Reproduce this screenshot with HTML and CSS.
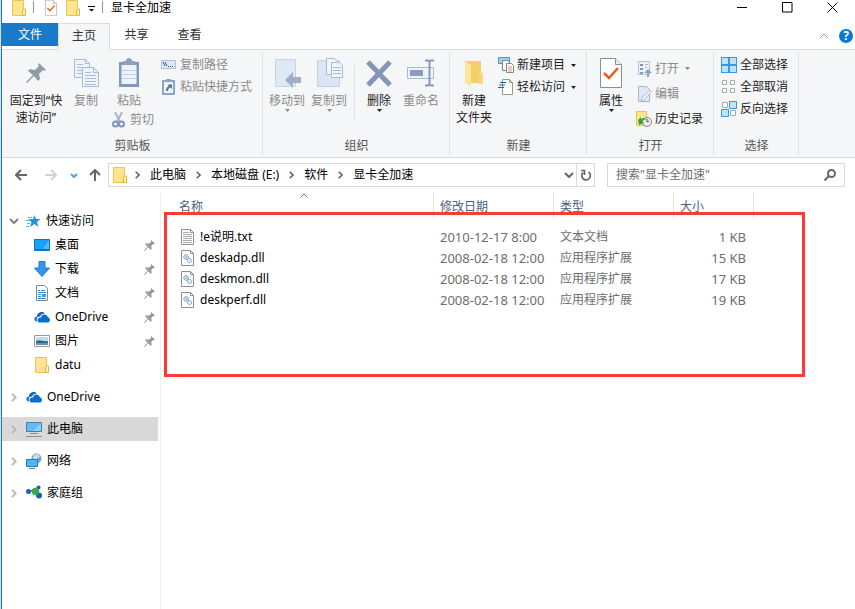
FILE: index.html
```html
<!DOCTYPE html>
<html lang="zh-CN">
<head>
<meta charset="utf-8">
<title>显卡全加速</title>
<link rel="stylesheet" href="styles.css">
</head>
<body>
<svg class="sprite" aria-hidden="true">
  <symbol id="folder" viewBox="0 0 14 16"><path d="M.5.5h11v9h1.500v6H.5z" fill="#ffe592" stroke="#eac54f"/><path d="M10.500 15.500V10l1-1h2v6.500z" fill="#fff0b8" stroke="#e3b83a"/></symbol>
  <symbol id="check-doc" viewBox="0 0 24 30"><path d="M1.500.5h15l6 6v23h-21z" fill="#fff" stroke="#8d8d8d"/><path d="M16.500.5v6h6" fill="#eee" stroke="#8d8d8d"/><path d="M5 15l5 5 9-10" fill="none" stroke="#f05a14" stroke-width="2.500"/></symbol>
  <symbol id="pin" viewBox="0 0 20 20"><path d="M13 0l7 7-2 1-1-1-4 4 1 5-2 2-4-5-7 7-1-1 7-7-5-4 2-2 5 1 4-4-1-1z" fill="#8e9aa4"/></symbol>
  <symbol id="caret" viewBox="0 0 5 3"><path d="M0 0h5L2.500 3z" fill="currentColor"/></symbol>
  <symbol id="chev-right" viewBox="0 0 5 8"><path d="M.7.7L4 4 .7 7.300" fill="none" stroke="currentColor" stroke-width="1.600"/></symbol>
  <symbol id="chev-down" viewBox="0 0 10 6"><path d="M1 1l4 4 4-4" fill="none" stroke="currentColor" stroke-width="2"/></symbol>
  <symbol id="pages" viewBox="0 0 25 28"><g fill="#edf3fb" stroke="#a9b9d2"><path d="M.5.5h11l4 4v14H.5z"/><path d="M8.500 8.500h11l5 5v14h-16z"/><path d="M11.500.5v4h4M19.500 8.500v5h5" fill="none"/></g><path d="M3 5.500h6M3 8.500h5M3 11.500h5M3 14.500h5M11 13.500h6M11 16.500h11M11 19.500h11M11 22.500h11M11 25.500h11" stroke="#a9bcdc"/></symbol>
  <symbol id="onedrive" viewBox="0 0 16 11"><path d="M1 9C-.5 7 1 5 3 5 3 1 8-1 11 2c-3 0-4 1-5 3-3 0-4 2-3 5-1 0-2-.3-2-1z" fill="#1067c4"/><path d="M4 10C2.500 8 4.500 5.500 7 6c.5-4 6-4 7 0 2.500.2 2.700 4.500 0 5H6c-1 0-2-.3-2-1z" fill="#0a6fd0"/></symbol>
  <symbol id="dll" viewBox="0 0 13 16"><path d="M.5.5h9l3 3v12H.5z" fill="#fff" stroke="#909090"/><path d="M9.500.5v3h3" fill="none" stroke="#909090"/><circle cx="5" cy="7" r="2.300" fill="#e5e9ed" stroke="#78838b" stroke-dasharray="1.500 .5"/><circle cx="5" cy="7" r=".8" fill="#8d9aa5"/><circle cx="8.500" cy="10.500" r="2.200" fill="#d6ebf8" stroke="#6fa5c6" stroke-dasharray="1.500 .5"/></symbol>
</svg>

<div class="window">
  <header class="titlebar">
    <svg class="qa-folder"><use href="#folder"/></svg><i class="tick"></i>
    <svg class="qa-doc"><use href="#check-doc"/></svg>
    <svg class="qa-folder"><use href="#folder"/></svg>
    <svg class="qa-menu" viewBox="0 0 7 6"><path d="M0 0h7v1H0zM1 3h5L3.500 5.500z"/></svg><i class="tick"></i>
    <h1>显卡全加速</h1>
    <div class="win-buttons">
      <button aria-label="最小化"><svg viewBox="0 0 11 11"><path d="M0 5.500h10"/></svg></button>
      <button aria-label="最大化"><svg viewBox="0 0 11 11"><path d="M.5.5h9.500v9.500H.5z"/></svg></button>
      <button aria-label="关闭"><svg viewBox="0 0 11 11"><path d="M.5.5l10 10M10.500.5l-10 10"/></svg></button>
    </div>
  </header>

  <nav class="tabs">
    <button class="file-tab">文件</button>
    <button class="tab active">主页</button>
    <button class="tab">共享</button>
    <button class="tab">查看</button>
    <div class="tab-tools">
      <button aria-label="折叠功能区"><svg class="collapse" viewBox="0 0 10 6"><path d="M1 5l4-4 4 4"/></svg></button>
      <button class="help" aria-label="帮助">?</button>
    </div>
  </nav>

  <section class="ribbon">
    <div class="group clipboard">
      <div class="body">
        <button class="big pin-btn"><span class="ico"><svg class="i-pin"><use href="#pin"/></svg></span>固定到“快<br>速访问”</button>
        <button class="big narrow off"><span class="ico"><svg class="i-pages"><use href="#pages"/></svg></span>复制</button>
        <div class="paste-grid">
          <button class="big narrow off"><span class="ico"><svg class="i-paste" viewBox="0 0 22 30"><path d="M1 4h20v25H1z" fill="#8398bd"/><path d="M3.500 7h15v19h-15z" fill="#eef4fc"/><path d="M5 3h3c0-4 6-4 6 0h3v4H5z" fill="#8fa0be"/><path d="M4 12.500h14M4 16.500h14M4 20.500h14" stroke="#c3d2e8"/></svg></span>粘贴</button>
          <div class="stack">
            <button class="small off"><svg viewBox="0 0 16 16"><path d="M.5 3.500h14v8H.5z" fill="#dce8f7" stroke="#b3c0d4"/><path d="M2 5l2 4m0-4l2 4M7 9.500h1m1 0h1m1 0h1" stroke="#44587c" fill="none"/></svg>复制路径</button>
            <button class="small off"><svg viewBox="0 0 16 16"><path d="M2 2h11v13H2z" fill="#edf4fc" stroke="#8fa3c2" stroke-width="2"/><path d="M5 0h5v3H5z" fill="#8fa3c2"/><path d="M5 12c0-3 1-4 3-5L6.500 5.500H11V10L9.500 8.500C8 9 7 10 7 12z" fill="#5c7399"/></svg>粘贴快捷方式</button>
          </div>
          <button class="small off cut"><svg viewBox="0 0 16 16"><path d="M4 0l5 10M11 0L6 10" stroke="#a8b5ca" stroke-width="2"/><circle cx="4.500" cy="12" r="2.500" fill="none" stroke="#8196ba" stroke-width="2"/><circle cx="10.500" cy="12" r="2.500" fill="none" stroke="#8196ba" stroke-width="2"/></svg>剪切</button>
        </div>
      </div>
      <h2>剪贴板</h2>
    </div>

    <div class="group organize">
      <div class="body">
        <button class="big off"><span class="ico"><svg class="i-wide" viewBox="0 0 28 30"><path d="M2.500 1.500h20v27h-20z" fill="#dfe8f5" stroke="#c5d4e9"/><path d="M12 22l8-8v5h8v6h-8v5z" fill="#a0aec7"/></svg></span>移动到<svg class="caret"><use href="#caret"/></svg></button>
        <button class="big off"><span class="ico"><svg class="i-wide" viewBox="0 0 28 30"><path d="M2.500 2.500h22v26h-22z" fill="#dbe5f3" stroke="#c5d4e9"/><g fill="#f1f6fc" stroke="#a9bad4"><path d="M11.500.5h8l3 3v13h-11z"/><path d="M16.500 4.500h8l3 3v12h-11z"/></g><path d="M18 9.500h8m-8 3h8m-8 3h8" stroke="#a4b8d8"/></svg></span>复制到<svg class="caret"><use href="#caret"/></svg></button>
        <i class="divider"></i>
        <button class="big"><span class="ico"><svg class="i-wide" viewBox="0 0 28 30"><path d="M3 4l22 23M25 4L3 27" stroke="#8495b5" stroke-width="5"/></svg></span>删除<svg class="caret"><use href="#caret"/></svg></button>
        <button class="big off"><span class="ico"><svg class="i-wide" viewBox="0 0 28 30"><path d="M.5 9.500h26v11H.5z" fill="#eef4fb" stroke="#a9b9d0"/><path d="M3 12h13v6H3z" fill="#8b9dbd"/><path d="M18 2.500h3l1.500 1 1.500-1h3M18 27.500h3l1.500-1 1.500 1h3M22.500 3v24" fill="none" stroke="#8799b9" stroke-width="2"/></svg></span>重命名</button>
      </div>
      <h2>组织</h2>
    </div>

    <div class="group create">
      <div class="body">
        <button class="big"><span class="ico"><svg class="i-wide" viewBox="0 0 28 30"><path d="M5 3h16v22H5z" fill="#f4cf69"/><path d="M5 3l6 4v22l-6-4z" fill="#ffe69a"/><path d="M19 15h4v11h-5z" fill="#f8d979"/></svg></span>新建<br>文件夹</button>
        <div class="stack">
          <button class="small"><svg viewBox="0 0 16 16"><path d="M.5.5h11v6H.5z" fill="#9fd0ee" stroke="#5593b7"/><path d="M4.500 3.500h5l2 2v8h-7z" fill="#fff" stroke="#888"/><path d="M8.500 6.500h5l2 2v7h-7z" fill="#fff" stroke="#888"/><path d="M10 10h4m-4 2h4m-4 2h4" stroke="#dc937c"/></svg>新建项目<svg class="caret"><use href="#caret"/></svg></button>
          <button class="small"><svg viewBox="0 0 16 16"><path d="M4.500.5h7l3 3v12h-10z" fill="#fff" stroke="#999"/><path d="M11.500.5v3h3" fill="none" stroke="#999"/><path d="M2 3.500h6M1 6h6M0 8.500h6" stroke="#1769ad"/></svg>轻松访问<svg class="caret"><use href="#caret"/></svg></button>
        </div>
      </div>
      <h2>新建</h2>
    </div>

    <div class="group open">
      <div class="body">
        <button class="big"><span class="ico"><svg class="i-doc"><use href="#check-doc"/></svg></span>属性<svg class="caret"><use href="#caret"/></svg></button>
        <div class="stack loose">
          <button class="small off"><svg viewBox="0 0 16 16"><path d="M2.500.5h11v13h-11z" fill="#edf3fa" stroke="#b4c2d5"/><path d="M4 3h3v2H4zm0 4h3v2H4zm0 4h3v2H4z" fill="#8195b7"/><path d="M9 3.500h3M9 6.500h2" stroke="#a8b7d0"/><path d="M11 16v-4H8l4-4 4 4h-3v4z" fill="#8da0c1"/></svg>打开<svg class="caret"><use href="#caret"/></svg></button>
          <button class="small off"><svg viewBox="0 0 16 16"><path d="M2.500.5h8l3 3v12h-11z" fill="#dfe9f6" stroke="#a5b5cf"/><path d="M14 4l1.500 1.500L8 14l-3 1 1-3z" fill="#fff" stroke="#a8b8d3"/></svg>编辑</button>
          <button class="small"><svg viewBox="0 0 16 16"><path d="M.5.5h10v14H.5z" fill="#ffe78d" stroke="#e5c64c"/><circle cx="11" cy="11" r="4.500" fill="#eee" stroke="#888"/><path d="M11 8v3l2-1" fill="none" stroke="#555"/><path d="M2 9l3-3v2c3-2 5-1 6 1-3-1-4 0-5 2l2 1-5 2z" fill="#2dab45"/></svg>历史记录</button>
        </div>
      </div>
      <h2>打开</h2>
    </div>

    <div class="group select">
      <div class="body">
        <div class="stack">
          <button class="small"><svg viewBox="0 0 16 16"><path d="M0 0h16v16H0z" fill="#3498e5"/><path d="M1 1h6v6H1zm8 0h6v6H9zM1 9h6v6H1zm8 0h6v6H9z" fill="#c1e3fa"/></svg>全部选择</button>
          <button class="small"><svg viewBox="0 0 16 16"><path d="M1.500 1.500h4v4h-4zm8 0h4v4h-4zm-8 8h4v4h-4zm8 0h4v4h-4z" fill="#fff" stroke="#aaa"/></svg>全部取消</button>
          <button class="small"><svg viewBox="0 0 16 16"><path d="M1.500 1.500h5v5h-5zm8 8h5v5h-5z" fill="#fff" stroke="#aaa"/><path d="M8.500.5h7v7h-7zm-8 8h7v7h-7z" fill="#c1e3fa" stroke="#3498e5"/></svg>反向选择</button>
        </div>
      </div>
      <h2>选择</h2>
    </div>
  </section>

  <div class="address-row">
    <div class="history">
      <button aria-label="后退"><svg viewBox="0 0 12 12"><path d="M12 6H1M6 1L1 6l5 5"/></svg></button>
      <button aria-label="前进" class="dim"><svg viewBox="0 0 12 12"><path d="M0 6h11M6 1l5 5-5 5"/></svg></button>
      <button aria-label="最近浏览的位置" class="recent"><svg viewBox="0 0 8 5"><path d="M1 1l3 3 3-3"/></svg></button>
      <button aria-label="上移"><svg viewBox="0 0 12 12"><path d="M6 12V1M1 6l5-5 5 5"/></svg></button>
    </div>
    <div class="crumbs">
      <svg class="crumb-folder"><use href="#folder"/></svg>
      <svg class="sep"><use href="#chev-right"/></svg><a href="#">此电脑</a>
      <svg class="sep"><use href="#chev-right"/></svg><a href="#">本地磁盘 (E:)</a>
      <svg class="sep"><use href="#chev-right"/></svg><a href="#">软件</a>
      <svg class="sep"><use href="#chev-right"/></svg><a href="#">显卡全加速</a>
      <button class="drop" aria-label="以前的位置"><svg class="chev"><use href="#chev-down"/></svg></button>
      <button class="refresh" aria-label="刷新"><svg viewBox="0 0 12 12"><path d="M8.500 3A4.300 4.300 0 1 1 3 3.500M1 1.500h3.500V6" fill="none" stroke="#666" stroke-width="1.700"/></svg></button>
    </div>
    <div class="search">
      <input type="search" aria-label="搜索" placeholder='搜索"显卡全加速"'>
      <svg viewBox="0 0 12 12"><circle cx="7.500" cy="4.500" r="3.500"/><path d="M5 7l-4.500 4.500"/></svg>
    </div>
  </div>

  <main class="content">
    <nav class="tree">
      <ul>
        <li><a href="#" class="root"><svg class="exp open-exp"><use href="#chev-down"/></svg><svg class="ico16" viewBox="0 0 16 16"><path d="M9.500 2l1.500 4h4.500l-3.500 3 1.500 5-4-3-4.500 3 1.500-5-3-3h4.500z" fill="#2691df"/><path d="M3 4.500h4M1 7.500h4M2 10.500h3M1 13.500h3" stroke="#61b5ef"/></svg>快速访问</a>
          <ul>
            <li><a href="#"><svg class="ico16" viewBox="0 0 16 16"><path d="M.5 2.500h15v11H.5z" fill="#18a1f8" stroke="#1673b5"/><path d="M15 3v10H8z" fill="#4cbafb"/><path d="M1 12.500h14" stroke="#0b75ba"/></svg>桌面<svg class="pin"><use href="#pin"/></svg></a></li>
            <li><a href="#"><svg class="ico16" viewBox="0 0 16 16"><path d="M5 .5h6V7h4.500L8 15.500.5 7H5z" fill="#3695e7" stroke="#227bc8"/></svg>下载<svg class="pin"><use href="#pin"/></svg></a></li>
            <li><a href="#"><svg class="ico16" viewBox="0 0 16 16"><path d="M2.500.5h8l3 3v12h-11z" fill="#fff" stroke="#888"/><path d="M4 5.500h2m1 0h4M4 7.500h8M4 9.500h3m-3 2h3m-3 2h8" stroke="#2a8fd5"/><path d="M8 9h4v3H8z" fill="#4a9bd1"/></svg>文档<svg class="pin"><use href="#pin"/></svg></a></li>
            <li><a href="#"><svg class="ico16"><use href="#onedrive"/></svg>OneDrive<svg class="pin"><use href="#pin"/></svg></a></li>
            <li><a href="#"><svg class="ico16" viewBox="0 0 16 16"><path d="M.5 2.500h15v11H.5z" fill="#fff" stroke="#999"/><path d="M2 4h12v8H2z" fill="#b9dcf5"/><path d="M2 8c4-2 7 1 12 0v2H2z" fill="#326b72"/><path d="M2 10h12v2H2z" fill="#5c96bd"/></svg>图片<svg class="pin"><use href="#pin"/></svg></a></li>
            <li><a href="#"><svg class="ico16"><use href="#folder"/></svg>datu</a></li>
          </ul>
        </li>
        <li><a href="#" class="root"><svg class="exp"><use href="#chev-right"/></svg><svg class="ico16"><use href="#onedrive"/></svg>OneDrive</a></li>
        <li><a href="#" class="root selected"><svg class="exp"><use href="#chev-right"/></svg><svg class="ico16" viewBox="0 0 16 16"><path d="M.5 1.500h15v9H.5z" fill="#5bbcf8" stroke="#477f9f"/><path d="M15 2v8H7z" fill="#8ad4fc"/><path d="M4 12.500h8M0 15.500h16" stroke="#7295ab"/></svg>此电脑</a></li>
        <li><a href="#" class="root"><svg class="exp"><use href="#chev-right"/></svg><svg class="ico16" viewBox="0 0 16 16"><circle cx="10.500" cy="5.500" r="5" fill="#6fa9c4"/><path d="M8 2l4-1 2 3-3 1-1 3-3-3z" fill="#c5e2ec"/><path d="M.5 6.500h11v7H.5z" fill="#4eb6f7" stroke="#2779ac"/><path d="M3 15.500h6" stroke="#577d95"/></svg>网络</a></li>
        <li><a href="#" class="root"><svg class="exp"><use href="#chev-right"/></svg><svg class="ico16" viewBox="0 0 16 16"><path d="M3 6l7 1 3-4M10 7l3 4" stroke="#9bc6d3"/><circle cx="2.500" cy="6.500" r="2.500" fill="#1763b0"/><circle cx="12.500" cy="2.500" r="2" fill="#1763b0"/><circle cx="13" cy="10.500" r="3" fill="#1763b0"/><circle cx="9.500" cy="6.500" r="3.700" fill="#35ab48"/></svg>家庭组</a></li>
      </ul>
    </nav>

    <section class="files">
      <table>
        <colgroup><col class="c-name"><col class="c-date"><col class="c-date"><col class="c-size"></colgroup>
        <thead><tr><th>名称<svg class="sort" viewBox="0 0 8 5"><path d="M.5 4.500L4 1l3.500 3.500"/></svg></th><th>修改日期</th><th>类型</th><th>大小</th></tr></thead>
        <tbody>
          <tr><td><span class="name"><svg viewBox="0 0 13 16"><path d="M.5.5h9l3 3v12H.5z" fill="#fff" stroke="#909090"/><path d="M9.500.5v3h3" fill="none" stroke="#909090"/><path d="M2 3.500h6M2 5.500h9M2 7.500h9M2 9.500h9M2 11.500h9M2 13.500h9" stroke="#aaa"/></svg>!e说明.txt</span></td><td class="num">2010-12-17 8:00</td><td>文本文档</td><td class="num">1 KB</td></tr>
          <tr><td><span class="name"><svg><use href="#dll"/></svg>deskadp.dll</span></td><td class="num">2008-02-18 12:00</td><td>应用程序扩展</td><td class="num">15 KB</td></tr>
          <tr><td><span class="name"><svg><use href="#dll"/></svg>deskmon.dll</span></td><td class="num">2008-02-18 12:00</td><td>应用程序扩展</td><td class="num">17 KB</td></tr>
          <tr><td><span class="name"><svg><use href="#dll"/></svg>deskperf.dll</span></td><td class="num">2008-02-18 12:00</td><td>应用程序扩展</td><td class="num">19 KB</td></tr>
        </tbody>
      </table>
      <div class="highlight"></div>
    </section>
  </main>
</div>
</body>
</html>
```
FILE: styles.css
```css
* { box-sizing: border-box; }
body {
  margin: 0;
  padding-left: 1px;
  min-height: 100vh;
  display: flex;
  background: #dcdcdc;
  color: #000;
  font: 12px/16px "Noto Sans", "Noto Sans CJK SC", sans-serif;
}
button, input { font: inherit; color: inherit; border: 0; background: none; padding: 0; margin: 0; }
a { color: inherit; text-decoration: none; }
ul { list-style: none; margin: 0; padding: 0; }
h1, h2 { margin: 0; font: inherit; }
svg { display: block; flex: none; }
.sprite { position: absolute; width: 0; height: 0; }
.window {
  flex: 1;
  min-width: 0;
  display: flex;
  flex-direction: column;
  background: #fff;
  border-left: 1px solid #1979ca;
}

/* title bar */
.titlebar { display: flex; align-items: flex-start; height: 23px; padding-left: 10px; }
.titlebar h1 { margin-left: 8px; }
.qa-folder { width: 14px; height: 16px; }
.qa-doc { width: 14px; height: 16px; margin: 0 8px 0 10px; }
.tick { width: 1px; height: 12px; margin-left: 7px; background: #999; }
.qa-menu { width: 7px; height: 6px; margin: 6px 0 0 8px; }
.titlebar .tick { margin-top: 1px; }
.win-buttons { display: flex; margin-left: auto; }
.win-buttons button { width: 45px; height: 14px; display: flex; align-items: center; justify-content: center; }
.win-buttons svg { width: 11px; height: 11px; fill: none; stroke: #000; }

/* tabs */
.tabs { display: flex; height: 26px; }
.file-tab { width: 56px; height: 23px; background: #1979ca; color: #fff; }
.tab { width: 53px; height: 26px; padding-bottom: 2px; color: #333; }
.tab.active {
  width: 52px;
  height: 27px;
  position: relative;
  background: #f5f6f7;
  border: 1px solid #dadbdc;
  border-bottom: 0;
}
.tab-tools { display: flex; align-items: center; gap: 10px; margin-left: auto; padding-right: 2px; }
.collapse { width: 10px; height: 6px; fill: none; stroke: #999; }
.help { width: 14px; height: 14px; border-radius: 50%; background: #0a78d6; color: #fff; font-weight: 700; line-height: 14px; }

/* ribbon */
.ribbon {
  display: flex;
  background: #f5f6f7;
  border: solid #dadbdc;
  border-width: 1px 0;
  color: #222;
}
.group { display: flex; flex-direction: column; position: relative; }
.group::after { content: ""; position: absolute; right: 0; top: 2px; bottom: 3px; width: 1px; background: #e0e1e3; }
.group h2 { text-align: center; height: 20px; line-height: 18px; color: #555; }
.body { display: flex; height: 87px; align-items: flex-start; }
.big { width: 42px; padding-top: 7px; line-height: 17px; white-space: nowrap; }
.big.narrow { width: 36px; }
.pin-btn { width: 64px; }
.ico { display: flex; align-items: center; justify-content: center; height: 32px; margin-bottom: 3px; }
.off { color: #8b8b8b; }
.i-pin { width: 20px; height: 20px; }
.i-pages { width: 25px; height: 28px; }
.i-paste { width: 22px; height: 30px; }
.i-wide { width: 28px; height: 30px; }
.i-doc { width: 24px; height: 30px; }
.caret { width: 5px; height: 3px; margin: 0 auto; }
.small { display: flex; align-items: center; gap: 3px; height: 22px; white-space: nowrap; }
.small svg { width: 16px; height: 16px; }
.small .caret { width: 5px; height: 3px; margin: 0 0 0 3px; }
.stack { padding-top: 4px; }
.loose { padding-top: 6px; }
.loose .small { height: 25px; }
.clipboard .body { padding: 0 11px 0 2px; }
.paste-grid { display: grid; grid-template-columns: 42px auto; margin-left: 7px; }
.paste-grid .stack { padding-left: 8px; }
.cut { grid-column: 1 / -1; gap: 3px; }
.group .divider { width: 1px; height: 55px; margin: 15px 3px 0 4px; background: #e0e1e3; }
.organize .body { padding: 0 8px 0 3px; }
.create .body { padding: 0 11px 0 0; }
.create .big { width: 48px; }
.open .body { padding: 0 11px 0 3px; }
.open .big { width: 42px; margin-right: 4px; }
.select .body { padding: 0 11px 0 7px; }

/* address row */
.address-row { display: flex; align-items: center; height: 34px; padding-right: 10px; }
.history { display: flex; align-items: center; gap: 18px; width: 106px; padding-left: 13px; }
.history svg { width: 12px; height: 12px; fill: none; stroke: #666; stroke-width: 2; }
.history .dim svg { stroke: #d4d4d4; }
.history .recent { margin: 0 -7px 0 -5px; }
.history .recent svg { width: 8px; height: 5px; stroke: #4aa3e6; }
.crumbs { flex: 2 1 487px; display: flex; align-items: center; height: 24px; border: 1px solid #d9d9d9; padding-left: 4px; white-space: nowrap; }
.crumb-folder { width: 14px; height: 16px; }
.sep { width: 5px; height: 8px; margin: 0 10px; color: #666; }
.crumb-folder + .sep { margin-left: 8px; }
.drop { margin-left: auto; width: 12px; height: 22px; }
.chev { width: 10px; height: 6px; color: #666; }
.refresh { width: 18px; height: 22px; padding-left: 3px; border-left: 1px solid #d9d9d9; }
.refresh svg { width: 12px; height: 12px; }
.search { flex: 1 1 238px; margin-left: 12px; height: 24px; display: flex; align-items: center; border: 1px solid #d9d9d9; padding: 0 8px; }
.search input { flex: 1; min-width: 0; outline: 0; }
.search input::placeholder { color: #6d6d6d; opacity: 1; }
.search svg { width: 12px; height: 12px; fill: none; stroke: #666; stroke-width: 2; }

/* navigation tree */
.content { flex: 1; display: flex; }
.tree { width: 159px; padding: 17px 2px 0 0; border-right: 1px solid #f0f0f0; }
.tree a { display: flex; align-items: center; height: 24px; padding: 0 3px 0 32px; gap: 5px; }
.tree a.root { padding-left: 8px; }
.tree > ul > li + li { margin-top: 8px; }
.tree .selected { background: #d9d9d9; }
.ico16 { width: 16px; height: 16px; }
.exp { width: 6px; height: 9px; margin: 0 2px 0 1px; color: #b5b5b5; }
.exp + .ico16 { margin-left: 2px; }
.exp.open-exp { width: 10px; height: 6px; margin: 0 -1px; color: #808080; }
.pin { width: 11px; height: 11px; margin-left: auto; }

/* file list */
.files { flex: 1; min-width: 0; position: relative; }
table { border-collapse: separate; border-spacing: 0; table-layout: fixed; width: 593px; }
.c-name { width: 273px; }
.c-date { width: 120px; }
.c-size { width: 80px; }
th { position: relative; height: 27px; padding: 2px 0 0 6px; border-right: 1px solid #e5e5e5; text-align: left; font-weight: 400; color: #4c607a; }
th:first-child { padding-left: 18px; }
.sort { position: absolute; left: 139px; top: 1px; width: 8px; height: 5px; fill: none; stroke: #777; }
tbody::before { content: ""; display: block; height: 7px; }
td { height: 21px; padding: 0 0 0 6px; color: #6d6d6d; white-space: nowrap; }
td:first-child { padding-left: 20px; color: #000; }
td:last-child { padding-right: 8px; text-align: right; }
.num { font-size: 13px; }
.name { display: flex; align-items: center; gap: 6px; }
.name svg { width: 13px; height: 16px; }
.highlight { position: absolute; left: 3px; top: 20px; right: 50px; height: 165px; border: 3px solid #fb3a3a; pointer-events: none; }
```
